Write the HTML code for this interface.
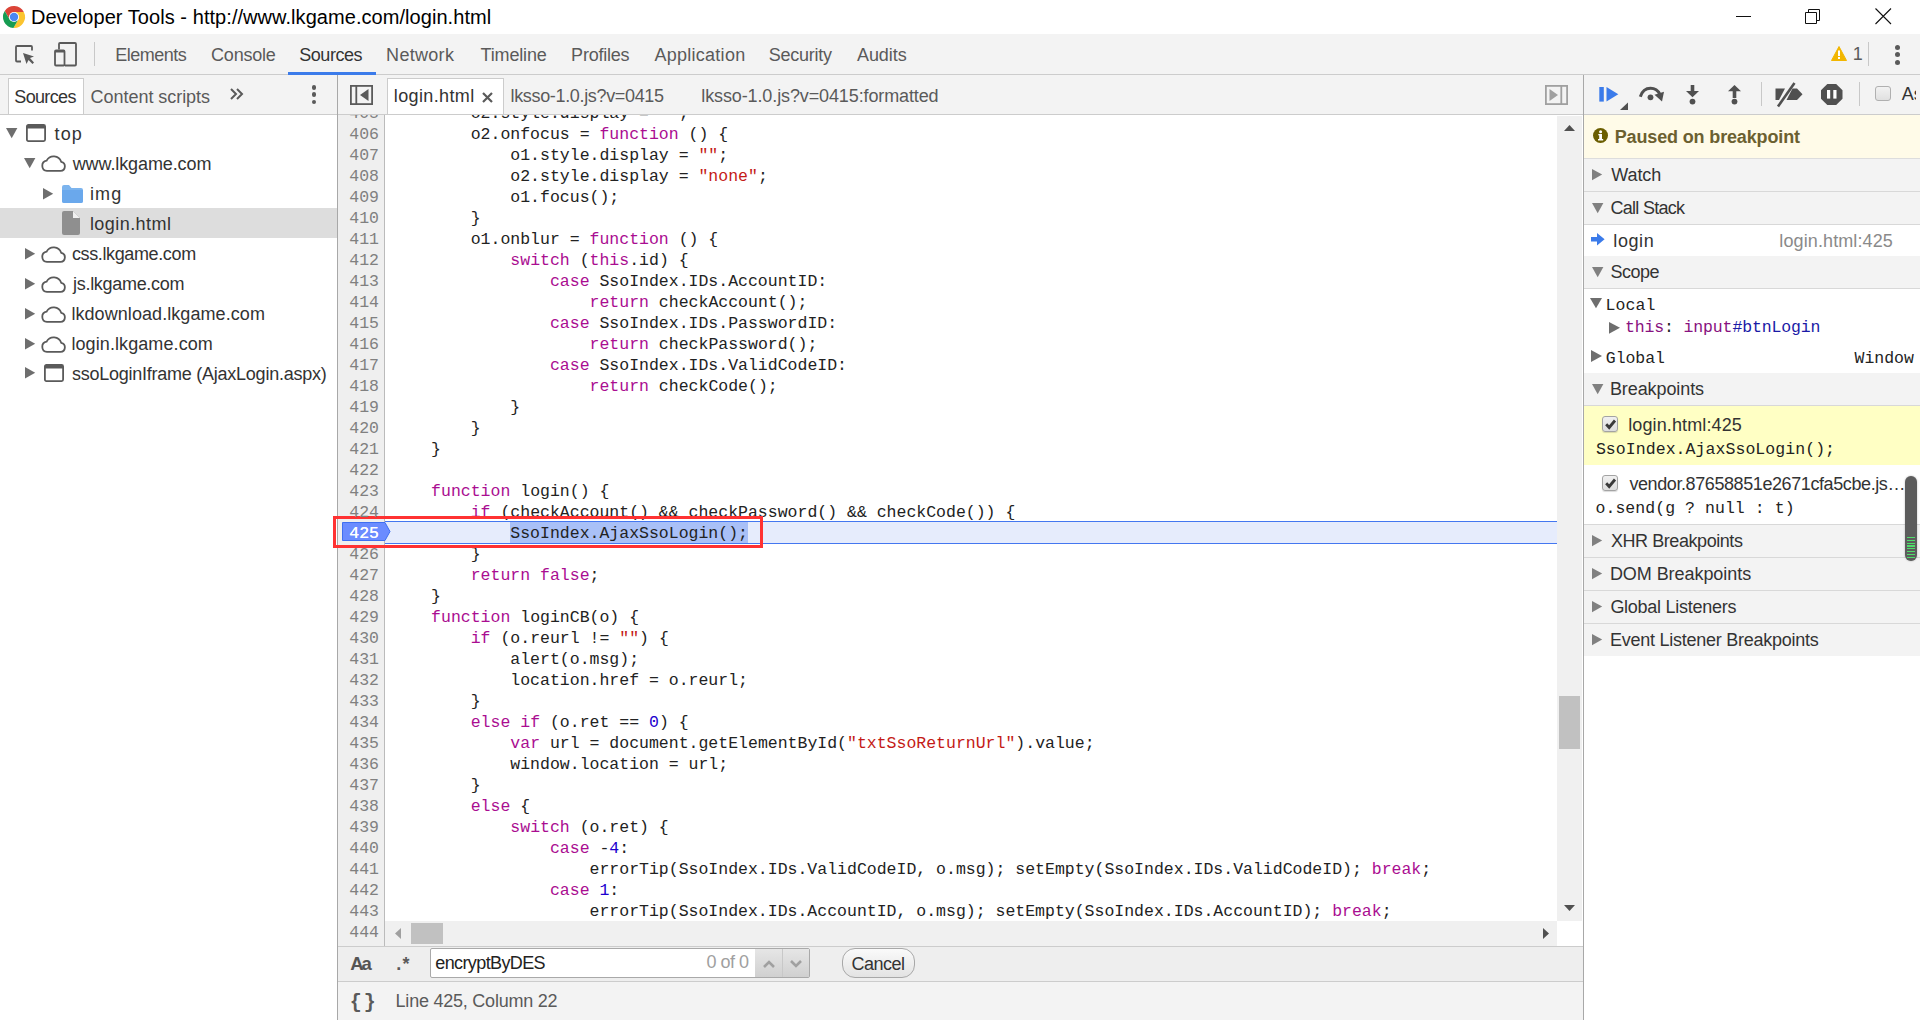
<!DOCTYPE html>
<html><head><meta charset="utf-8"><title>DevTools</title>
<style>
html,body{margin:0;padding:0;width:1920px;height:1020px;overflow:hidden;background:#fff;}
body>div,body>svg{position:absolute;}
svg{overflow:visible;}
</style></head><body>
<div style="left:0px;top:0px;width:1920px;height:34px;background:#ffffff;"></div>
<svg style="left:3px;top:6px;" width="22" height="22" viewBox="0 0 22 22">
<path d="M11 11 L11 6 L20.8 6 A11 11 0 0 0 1.77 5.01 L6.67 13.5 Z" fill="#db4437"/>
<path d="M11 11 L11 6 L20.8 6 A11 11 0 0 1 10.43 21.99 L15.33 13.5 Z" fill="#fbc42f"/>
<path d="M11 11 L15.33 13.5 L10.43 21.99 A11 11 0 0 1 1.77 5.01 L6.67 13.5 Z" fill="#169c52"/>
<circle cx="11" cy="11" r="5.1" fill="#ffffff"/>
<circle cx="11" cy="11" r="4.2" fill="#4a87f2"/>
</svg>
<div style="left:30.9px;top:6.97px;font-family:'Liberation Sans', sans-serif;font-size:20px;line-height:20px;color:#000000;white-space:pre;letter-spacing:0.055px;">Developer Tools - http://www.lkgame.com/login.html</div>
<div style="left:1736px;top:16px;width:15px;height:1px;background:#111;"></div>
<svg style="left:1805px;top:9px;" width="16" height="16" viewBox="0 0 16 16"><path d="M0.5 3.5 H11.5 V14.5 H0.5 Z M3.5 3.5 V0.5 H14.5 V11.5 H11.5" fill="none" stroke="#111" stroke-width="1"/></svg>
<svg style="left:1875px;top:8px;" width="17" height="17" viewBox="0 0 17 17"><path d="M0.5 0.5 L16 16 M16 0.5 L0.5 16" stroke="#111" stroke-width="1.1"/></svg>
<div style="left:0px;top:34px;width:1920px;height:40px;background:#f3f3f3;"></div>
<div style="left:0px;top:74px;width:1920px;height:1px;background:#cccccc;"></div>
<svg style="left:15px;top:45px;" width="20" height="20" viewBox="0 0 20 20"><path d="M6 16.5 H2 Q1 16.5 1 15.5 V2 Q1 1 2 1 H16 Q17 1 17 2 V5.5" fill="none" stroke="#5a5a5a" stroke-width="1.8"/>
<path d="M8 8 L19 11.5 L15 13 L19 17.5 L17.5 19 L13.5 15 L11.5 19 Z" fill="#5a5a5a"/></svg>
<svg style="left:54px;top:42px;" width="23" height="25" viewBox="0 0 23 25"><path d="M5 7.5 V2 Q5 1 6 1 H21 Q22 1 22 2 V22.5 Q22 23.5 21 23.5 H11" fill="none" stroke="#5a5a5a" stroke-width="1.8"/>
<rect x="1" y="8.5" width="9.5" height="15" rx="1" fill="none" stroke="#5a5a5a" stroke-width="1.8"/>
<rect x="1" y="8" width="9.5" height="2.5" fill="#5a5a5a"/></svg>
<div style="left:94px;top:42px;width:1px;height:24px;background:#c8c8c8;"></div>
<div style="left:115.3px;top:45.76px;font-family:'Liberation Sans', sans-serif;font-size:18px;line-height:18px;color:#5a5a5a;white-space:pre;letter-spacing:-0.529px;">Elements</div>
<div style="left:211.1px;top:45.76px;font-family:'Liberation Sans', sans-serif;font-size:18px;line-height:18px;color:#5a5a5a;white-space:pre;letter-spacing:-0.233px;">Console</div>
<div style="left:299.2px;top:45.76px;font-family:'Liberation Sans', sans-serif;font-size:18px;line-height:18px;color:#333333;white-space:pre;letter-spacing:-0.433px;">Sources</div>
<div style="left:386.1px;top:45.76px;font-family:'Liberation Sans', sans-serif;font-size:18px;line-height:18px;color:#5a5a5a;white-space:pre;letter-spacing:0.3px;">Network</div>
<div style="left:480.6px;top:45.76px;font-family:'Liberation Sans', sans-serif;font-size:18px;line-height:18px;color:#5a5a5a;white-space:pre;letter-spacing:-0.171px;">Timeline</div>
<div style="left:571.1px;top:45.76px;font-family:'Liberation Sans', sans-serif;font-size:18px;line-height:18px;color:#5a5a5a;white-space:pre;letter-spacing:-0.214px;">Profiles</div>
<div style="left:654.5px;top:45.76px;font-family:'Liberation Sans', sans-serif;font-size:18px;line-height:18px;color:#5a5a5a;white-space:pre;letter-spacing:0.26px;">Application</div>
<div style="left:768.7px;top:45.76px;font-family:'Liberation Sans', sans-serif;font-size:18px;line-height:18px;color:#5a5a5a;white-space:pre;letter-spacing:-0.243px;">Security</div>
<div style="left:857.0px;top:45.76px;font-family:'Liberation Sans', sans-serif;font-size:18px;line-height:18px;color:#5a5a5a;white-space:pre;letter-spacing:-0.08px;">Audits</div>
<div style="left:288px;top:72px;width:88px;height:3px;background:#3b7bea;"></div>
<svg style="left:1831px;top:46px;" width="16" height="15" viewBox="0 0 16 15"><path d="M8 0.5 L15.5 14.5 H0.5 Z" fill="#f2b600" stroke="#f2b600" stroke-linejoin="round" stroke-width="1"/><rect x="7" y="4.5" width="2" height="5.5" fill="#fff"/><rect x="7" y="11" width="2" height="2" fill="#fff"/></svg>
<div style="left:1852.7px;top:45.26px;font-family:'Liberation Sans', sans-serif;font-size:18px;line-height:18px;color:#5a5a5a;white-space:pre;letter-spacing:0px;">1</div>
<div style="left:1868px;top:42px;width:1px;height:24px;background:#c8c8c8;"></div>
<div style="left:1894.5px;top:45.0px;width:5px;height:5px;border-radius:50%;background:#5a5a5a"></div>
<div style="left:1894.5px;top:52.0px;width:5px;height:5px;border-radius:50%;background:#5a5a5a"></div>
<div style="left:1894.5px;top:59.5px;width:5px;height:5px;border-radius:50%;background:#5a5a5a"></div>
<div style="left:0px;top:75px;width:1920px;height:39px;background:#f3f3f3;"></div>
<div style="left:0px;top:114px;width:1920px;height:1px;background:#cccccc;"></div>
<div style="left:8px;top:78px;width:76px;height:36px;background:#ffffff;box-sizing:border-box;border:1px solid #cccccc;border-bottom:none;"></div>
<div style="left:14.3px;top:87.76px;font-family:'Liberation Sans', sans-serif;font-size:18px;line-height:18px;color:#333333;white-space:pre;letter-spacing:-0.65px;">Sources</div>
<div style="left:90.6px;top:87.76px;font-family:'Liberation Sans', sans-serif;font-size:18px;line-height:18px;color:#5a5a5a;white-space:pre;letter-spacing:-0.043px;">Content scripts</div>
<svg style="left:230px;top:88px;" width="14" height="12" viewBox="0 0 14 12"><path d="M1 1 L6 6 L1 11 M7 1 L12 6 L7 11" fill="none" stroke="#5a5a5a" stroke-width="2"/></svg>
<div style="left:311.5px;top:85.2px;width:4.6px;height:4.6px;border-radius:50%;background:#5a5a5a"></div>
<div style="left:311.5px;top:92.4px;width:4.6px;height:4.6px;border-radius:50%;background:#5a5a5a"></div>
<div style="left:311.5px;top:99.7px;width:4.6px;height:4.6px;border-radius:50%;background:#5a5a5a"></div>
<div style="left:337px;top:75px;width:1px;height:945px;background:#a8a8a8;"></div>
<div style="left:1583px;top:75px;width:1px;height:945px;background:#a8a8a8;"></div>
<svg style="left:350px;top:85px;" width="23" height="20" viewBox="0 0 23 20"><rect x="0.9" y="0.9" width="21.2" height="18.2" fill="none" stroke="#5a5a5a" stroke-width="1.8"/><rect x="5.4" y="1" width="1.8" height="18" fill="#5a5a5a"/><path d="M10 10 L18.5 4 V16 Z" fill="#5a5a5a"/></svg>
<div style="left:387px;top:78px;width:117px;height:36px;background:#ffffff;box-sizing:border-box;border:1px solid #cccccc;border-bottom:none;"></div>
<div style="left:393.8px;top:87.26px;font-family:'Liberation Sans', sans-serif;font-size:18px;line-height:18px;color:#333333;white-space:pre;letter-spacing:0.378px;">login.html</div>
<svg style="left:482px;top:91.5px;" width="11" height="11" viewBox="0 0 11 11"><path d="M1 1 L10 10 M10 1 L1 10" stroke="#5a5a5a" stroke-width="2.2"/></svg>
<div style="left:510.5px;top:87.26px;font-family:'Liberation Sans', sans-serif;font-size:18px;line-height:18px;color:#5a5a5a;white-space:pre;letter-spacing:-0.339px;">lksso-1.0.js?v=0415</div>
<div style="left:701.3px;top:87.26px;font-family:'Liberation Sans', sans-serif;font-size:18px;line-height:18px;color:#5a5a5a;white-space:pre;letter-spacing:-0.118px;">lksso-1.0.js?v=0415:formatted</div>
<svg style="left:1545px;top:85px;" width="23" height="20" viewBox="0 0 23 20"><rect x="0.9" y="0.9" width="21.2" height="18.2" fill="none" stroke="#a0a0a0" stroke-width="1.8"/><rect x="15.4" y="1" width="1.8" height="18" fill="#a0a0a0"/><path d="M13 10 L4.5 4 V16 Z" fill="#a0a0a0"/></svg>
<div style="left:0px;top:208px;width:337px;height:30px;background:#dddddd;"></div>
<svg style="left:6.4px;top:128.4px;" width="11.4" height="10.2" viewBox="0 0 11.4 10.2"><path d="M0 0 H11.4 L5.7 10.2 Z" fill="#6e6e6e"/></svg>
<svg style="left:26px;top:124px;" width="20" height="18" viewBox="0 0 20 18"><rect x="0.9" y="0.9" width="18.2" height="16.2" rx="1.5" fill="none" stroke="#5a5a5a" stroke-width="1.8"/><rect x="1" y="1" width="18" height="3.5" fill="#5a5a5a"/></svg>
<div style="left:54.6px;top:124.76px;font-family:'Liberation Sans', sans-serif;font-size:18px;line-height:18px;color:#333333;white-space:pre;letter-spacing:1.05px;">top</div>
<svg style="left:24.2px;top:158.3px;" width="11.4" height="10.2" viewBox="0 0 11.4 10.2"><path d="M0 0 H11.4 L5.7 10.2 Z" fill="#6e6e6e"/></svg>
<svg style="left:39.5px;top:154px;" width="27" height="18" viewBox="0 0 27 18"><path d="M7 16.9 H20.5 A4.6 4.6 0 0 0 21.2 7.8 A8 8 0 0 0 6.6 6.6 A5.2 5.2 0 0 0 7 16.9 Z" fill="none" stroke="#5a5a5a" stroke-width="1.8"/></svg>
<div style="left:72.7px;top:154.76px;font-family:'Liberation Sans', sans-serif;font-size:18px;line-height:18px;color:#333333;white-space:pre;letter-spacing:-0.1px;">www.lkgame.com</div>
<svg style="left:43.3px;top:187.6px;" width="10.2" height="11.4" viewBox="0 0 10.2 11.4"><path d="M0 0 L10.2 5.7 L0 11.4 Z" fill="#6e6e6e"/></svg>
<svg style="left:62px;top:185px;" width="21" height="18" viewBox="0 0 21 18"><path d="M0 2 Q0 0 2 0 H7 L9.5 3 H19 Q21 3 21 5 V16 Q21 18 19 18 H2 Q0 18 0 16 Z" fill="#7cb4ee"/><path d="M0 5 H21 V16 Q21 18 19 18 H2 Q0 18 0 16 Z" fill="#6aa8ec"/></svg>
<div style="left:89.9px;top:184.76px;font-family:'Liberation Sans', sans-serif;font-size:18px;line-height:18px;color:#333333;white-space:pre;letter-spacing:1.2px;">img</div>
<svg style="left:62px;top:211px;" width="18" height="24" viewBox="0 0 18 24"><path d="M2 0 H11 L18 7 V22 Q18 24 16 24 H2 Q0 24 0 22 V2 Q0 0 2 0 Z" fill="#8f8f8f"/><path d="M11 0 L18 7 H11 Z" fill="#f0f0f0"/></svg>
<div style="left:89.9px;top:214.76px;font-family:'Liberation Sans', sans-serif;font-size:18px;line-height:18px;color:#333333;white-space:pre;letter-spacing:0.444px;">login.html</div>
<svg style="left:25.3px;top:247.8px;" width="10.2" height="11.4" viewBox="0 0 10.2 11.4"><path d="M0 0 L10.2 5.7 L0 11.4 Z" fill="#6e6e6e"/></svg>
<svg style="left:39.5px;top:244.5px;" width="27" height="18" viewBox="0 0 27 18"><path d="M7 16.9 H20.5 A4.6 4.6 0 0 0 21.2 7.8 A8 8 0 0 0 6.6 6.6 A5.2 5.2 0 0 0 7 16.9 Z" fill="none" stroke="#5a5a5a" stroke-width="1.8"/></svg>
<div style="left:71.9px;top:244.76px;font-family:'Liberation Sans', sans-serif;font-size:18px;line-height:18px;color:#333333;white-space:pre;letter-spacing:-0.369px;">css.lkgame.com</div>
<svg style="left:25.3px;top:277.8px;" width="10.2" height="11.4" viewBox="0 0 10.2 11.4"><path d="M0 0 L10.2 5.7 L0 11.4 Z" fill="#6e6e6e"/></svg>
<svg style="left:39.5px;top:274.5px;" width="27" height="18" viewBox="0 0 27 18"><path d="M7 16.9 H20.5 A4.6 4.6 0 0 0 21.2 7.8 A8 8 0 0 0 6.6 6.6 A5.2 5.2 0 0 0 7 16.9 Z" fill="none" stroke="#5a5a5a" stroke-width="1.8"/></svg>
<div style="left:73.1px;top:274.76px;font-family:'Liberation Sans', sans-serif;font-size:18px;line-height:18px;color:#333333;white-space:pre;letter-spacing:-0.308px;">js.lkgame.com</div>
<svg style="left:25.3px;top:307.8px;" width="10.2" height="11.4" viewBox="0 0 10.2 11.4"><path d="M0 0 L10.2 5.7 L0 11.4 Z" fill="#6e6e6e"/></svg>
<svg style="left:39.5px;top:304.5px;" width="27" height="18" viewBox="0 0 27 18"><path d="M7 16.9 H20.5 A4.6 4.6 0 0 0 21.2 7.8 A8 8 0 0 0 6.6 6.6 A5.2 5.2 0 0 0 7 16.9 Z" fill="none" stroke="#5a5a5a" stroke-width="1.8"/></svg>
<div style="left:71.4px;top:304.76px;font-family:'Liberation Sans', sans-serif;font-size:18px;line-height:18px;color:#333333;white-space:pre;letter-spacing:0.07px;">lkdownload.lkgame.com</div>
<svg style="left:25.3px;top:337.8px;" width="10.2" height="11.4" viewBox="0 0 10.2 11.4"><path d="M0 0 L10.2 5.7 L0 11.4 Z" fill="#6e6e6e"/></svg>
<svg style="left:39.5px;top:334.5px;" width="27" height="18" viewBox="0 0 27 18"><path d="M7 16.9 H20.5 A4.6 4.6 0 0 0 21.2 7.8 A8 8 0 0 0 6.6 6.6 A5.2 5.2 0 0 0 7 16.9 Z" fill="none" stroke="#5a5a5a" stroke-width="1.8"/></svg>
<div style="left:71.4px;top:334.76px;font-family:'Liberation Sans', sans-serif;font-size:18px;line-height:18px;color:#333333;white-space:pre;letter-spacing:0.093px;">login.lkgame.com</div>
<svg style="left:25.3px;top:367.4px;" width="10.2" height="11.4" viewBox="0 0 10.2 11.4"><path d="M0 0 L10.2 5.7 L0 11.4 Z" fill="#6e6e6e"/></svg>
<svg style="left:44px;top:364px;" width="20" height="18" viewBox="0 0 20 18"><rect x="0.9" y="0.9" width="18.2" height="16.2" rx="1.5" fill="none" stroke="#5a5a5a" stroke-width="1.8"/><rect x="1" y="1" width="18" height="3.5" fill="#5a5a5a"/></svg>
<div style="left:72.1px;top:364.76px;font-family:'Liberation Sans', sans-serif;font-size:18px;line-height:18px;color:#333333;white-space:pre;letter-spacing:-0.253px;">ssoLoginIframe (AjaxLogin.aspx)</div>
<div style="left:338px;top:115px;width:46px;height:832px;background:#efefef;"></div>
<div style="left:384px;top:115px;width:1px;height:832px;background:#bbbbbb;"></div>
<div style="left:385px;top:521px;width:1172px;height:23px;background:#e6ecfc;box-sizing:border-box;border-top:1px solid #4477f0;border-bottom:1px solid #4477f0;"></div>
<div style="left:510.3px;top:522px;width:237.6px;height:21px;background:#a9c0f7;"></div>
<div style="left:338px;top:115px;width:1219px;height:831px;overflow:hidden;">
<div style="position:absolute;left:53.5px;top:-8.65px;font-family:'Liberation Mono', monospace;font-size:16.5px;line-height:16.5px;color:#222222;white-space:pre;">        o2.style.display = <span style="color:#c41a16">&quot;&quot;</span>;</div>
<div style="position:absolute;left:53.5px;top:12.35px;font-family:'Liberation Mono', monospace;font-size:16.5px;line-height:16.5px;color:#222222;white-space:pre;">        o2.onfocus = <span style="color:#aa0d91">function</span> () {</div>
<div style="position:absolute;left:53.5px;top:33.35px;font-family:'Liberation Mono', monospace;font-size:16.5px;line-height:16.5px;color:#222222;white-space:pre;">            o1.style.display = <span style="color:#c41a16">&quot;&quot;</span>;</div>
<div style="position:absolute;left:53.5px;top:54.35px;font-family:'Liberation Mono', monospace;font-size:16.5px;line-height:16.5px;color:#222222;white-space:pre;">            o2.style.display = <span style="color:#c41a16">&quot;none&quot;</span>;</div>
<div style="position:absolute;left:53.5px;top:75.35px;font-family:'Liberation Mono', monospace;font-size:16.5px;line-height:16.5px;color:#222222;white-space:pre;">            o1.focus();</div>
<div style="position:absolute;left:53.5px;top:96.35px;font-family:'Liberation Mono', monospace;font-size:16.5px;line-height:16.5px;color:#222222;white-space:pre;">        }</div>
<div style="position:absolute;left:53.5px;top:117.35px;font-family:'Liberation Mono', monospace;font-size:16.5px;line-height:16.5px;color:#222222;white-space:pre;">        o1.onblur = <span style="color:#aa0d91">function</span> () {</div>
<div style="position:absolute;left:53.5px;top:138.35px;font-family:'Liberation Mono', monospace;font-size:16.5px;line-height:16.5px;color:#222222;white-space:pre;">            <span style="color:#aa0d91">switch</span> (<span style="color:#aa0d91">this</span>.id) {</div>
<div style="position:absolute;left:53.5px;top:159.35px;font-family:'Liberation Mono', monospace;font-size:16.5px;line-height:16.5px;color:#222222;white-space:pre;">                <span style="color:#aa0d91">case</span> SsoIndex.IDs.AccountID:</div>
<div style="position:absolute;left:53.5px;top:180.35px;font-family:'Liberation Mono', monospace;font-size:16.5px;line-height:16.5px;color:#222222;white-space:pre;">                    <span style="color:#aa0d91">return</span> checkAccount();</div>
<div style="position:absolute;left:53.5px;top:201.35px;font-family:'Liberation Mono', monospace;font-size:16.5px;line-height:16.5px;color:#222222;white-space:pre;">                <span style="color:#aa0d91">case</span> SsoIndex.IDs.PasswordID:</div>
<div style="position:absolute;left:53.5px;top:222.35px;font-family:'Liberation Mono', monospace;font-size:16.5px;line-height:16.5px;color:#222222;white-space:pre;">                    <span style="color:#aa0d91">return</span> checkPassword();</div>
<div style="position:absolute;left:53.5px;top:243.35px;font-family:'Liberation Mono', monospace;font-size:16.5px;line-height:16.5px;color:#222222;white-space:pre;">                <span style="color:#aa0d91">case</span> SsoIndex.IDs.ValidCodeID:</div>
<div style="position:absolute;left:53.5px;top:264.35px;font-family:'Liberation Mono', monospace;font-size:16.5px;line-height:16.5px;color:#222222;white-space:pre;">                    <span style="color:#aa0d91">return</span> checkCode();</div>
<div style="position:absolute;left:53.5px;top:285.35px;font-family:'Liberation Mono', monospace;font-size:16.5px;line-height:16.5px;color:#222222;white-space:pre;">            }</div>
<div style="position:absolute;left:53.5px;top:306.35px;font-family:'Liberation Mono', monospace;font-size:16.5px;line-height:16.5px;color:#222222;white-space:pre;">        }</div>
<div style="position:absolute;left:53.5px;top:327.35px;font-family:'Liberation Mono', monospace;font-size:16.5px;line-height:16.5px;color:#222222;white-space:pre;">    }</div>
<div style="position:absolute;left:53.5px;top:348.35px;font-family:'Liberation Mono', monospace;font-size:16.5px;line-height:16.5px;color:#222222;white-space:pre;"></div>
<div style="position:absolute;left:53.5px;top:369.35px;font-family:'Liberation Mono', monospace;font-size:16.5px;line-height:16.5px;color:#222222;white-space:pre;">    <span style="color:#aa0d91">function</span> login() {</div>
<div style="position:absolute;left:53.5px;top:390.35px;font-family:'Liberation Mono', monospace;font-size:16.5px;line-height:16.5px;color:#222222;white-space:pre;">        <span style="color:#aa0d91">if</span> (checkAccount() &amp;&amp; checkPassword() &amp;&amp; checkCode()) {</div>
<div style="position:absolute;left:53.5px;top:411.35px;font-family:'Liberation Mono', monospace;font-size:16.5px;line-height:16.5px;color:#222222;white-space:pre;">            SsoIndex.AjaxSsoLogin();</div>
<div style="position:absolute;left:53.5px;top:432.35px;font-family:'Liberation Mono', monospace;font-size:16.5px;line-height:16.5px;color:#222222;white-space:pre;">        }</div>
<div style="position:absolute;left:53.5px;top:453.35px;font-family:'Liberation Mono', monospace;font-size:16.5px;line-height:16.5px;color:#222222;white-space:pre;">        <span style="color:#aa0d91">return</span> <span style="color:#aa0d91">false</span>;</div>
<div style="position:absolute;left:53.5px;top:474.35px;font-family:'Liberation Mono', monospace;font-size:16.5px;line-height:16.5px;color:#222222;white-space:pre;">    }</div>
<div style="position:absolute;left:53.5px;top:495.35px;font-family:'Liberation Mono', monospace;font-size:16.5px;line-height:16.5px;color:#222222;white-space:pre;">    <span style="color:#aa0d91">function</span> loginCB(o) {</div>
<div style="position:absolute;left:53.5px;top:516.35px;font-family:'Liberation Mono', monospace;font-size:16.5px;line-height:16.5px;color:#222222;white-space:pre;">        <span style="color:#aa0d91">if</span> (o.reurl != <span style="color:#c41a16">&quot;&quot;</span>) {</div>
<div style="position:absolute;left:53.5px;top:537.35px;font-family:'Liberation Mono', monospace;font-size:16.5px;line-height:16.5px;color:#222222;white-space:pre;">            alert(o.msg);</div>
<div style="position:absolute;left:53.5px;top:558.35px;font-family:'Liberation Mono', monospace;font-size:16.5px;line-height:16.5px;color:#222222;white-space:pre;">            location.href = o.reurl;</div>
<div style="position:absolute;left:53.5px;top:579.35px;font-family:'Liberation Mono', monospace;font-size:16.5px;line-height:16.5px;color:#222222;white-space:pre;">        }</div>
<div style="position:absolute;left:53.5px;top:600.35px;font-family:'Liberation Mono', monospace;font-size:16.5px;line-height:16.5px;color:#222222;white-space:pre;">        <span style="color:#aa0d91">else</span> <span style="color:#aa0d91">if</span> (o.ret == <span style="color:#1c00cf">0</span>) {</div>
<div style="position:absolute;left:53.5px;top:621.35px;font-family:'Liberation Mono', monospace;font-size:16.5px;line-height:16.5px;color:#222222;white-space:pre;">            <span style="color:#aa0d91">var</span> url = document.getElementById(<span style="color:#c41a16">&quot;txtSsoReturnUrl&quot;</span>).value;</div>
<div style="position:absolute;left:53.5px;top:642.35px;font-family:'Liberation Mono', monospace;font-size:16.5px;line-height:16.5px;color:#222222;white-space:pre;">            window.location = url;</div>
<div style="position:absolute;left:53.5px;top:663.35px;font-family:'Liberation Mono', monospace;font-size:16.5px;line-height:16.5px;color:#222222;white-space:pre;">        }</div>
<div style="position:absolute;left:53.5px;top:684.35px;font-family:'Liberation Mono', monospace;font-size:16.5px;line-height:16.5px;color:#222222;white-space:pre;">        <span style="color:#aa0d91">else</span> {</div>
<div style="position:absolute;left:53.5px;top:705.35px;font-family:'Liberation Mono', monospace;font-size:16.5px;line-height:16.5px;color:#222222;white-space:pre;">            <span style="color:#aa0d91">switch</span> (o.ret) {</div>
<div style="position:absolute;left:53.5px;top:726.35px;font-family:'Liberation Mono', monospace;font-size:16.5px;line-height:16.5px;color:#222222;white-space:pre;">                <span style="color:#aa0d91">case</span> -<span style="color:#1c00cf">4</span>:</div>
<div style="position:absolute;left:53.5px;top:747.35px;font-family:'Liberation Mono', monospace;font-size:16.5px;line-height:16.5px;color:#222222;white-space:pre;">                    errorTip(SsoIndex.IDs.ValidCodeID, o.msg); setEmpty(SsoIndex.IDs.ValidCodeID); <span style="color:#aa0d91">break</span>;</div>
<div style="position:absolute;left:53.5px;top:768.35px;font-family:'Liberation Mono', monospace;font-size:16.5px;line-height:16.5px;color:#222222;white-space:pre;">                <span style="color:#aa0d91">case</span> <span style="color:#1c00cf">1</span>:</div>
<div style="position:absolute;left:53.5px;top:789.35px;font-family:'Liberation Mono', monospace;font-size:16.5px;line-height:16.5px;color:#222222;white-space:pre;">                    errorTip(SsoIndex.IDs.AccountID, o.msg); setEmpty(SsoIndex.IDs.AccountID); <span style="color:#aa0d91">break</span>;</div>
<div style="position:absolute;left:53.5px;top:810.35px;font-family:'Liberation Mono', monospace;font-size:16.5px;line-height:16.5px;color:#222222;white-space:pre;">                <span style="color:#aa0d91">case</span> <span style="color:#1c00cf">2</span>:</div>
<div style="position:absolute;left:53.5px;top:831.35px;font-family:'Liberation Mono', monospace;font-size:16.5px;line-height:16.5px;color:#222222;white-space:pre;">                    errorTip(SsoIndex.IDs.PasswordID, o.msg); setEmpty(SsoIndex.IDs.PasswordID); <span style="color:#aa0d91">break</span>;</div>
</div>
<div style="left:338px;top:115px;width:46px;height:832px;overflow:hidden;">
<div style="position:absolute;right:5px;top:-8.65px;font-family:'Liberation Mono', monospace;font-size:16.5px;line-height:16.5px;color:#808080;white-space:pre;z-index:2">405</div>
<div style="position:absolute;right:5px;top:12.35px;font-family:'Liberation Mono', monospace;font-size:16.5px;line-height:16.5px;color:#808080;white-space:pre;z-index:2">406</div>
<div style="position:absolute;right:5px;top:33.35px;font-family:'Liberation Mono', monospace;font-size:16.5px;line-height:16.5px;color:#808080;white-space:pre;z-index:2">407</div>
<div style="position:absolute;right:5px;top:54.35px;font-family:'Liberation Mono', monospace;font-size:16.5px;line-height:16.5px;color:#808080;white-space:pre;z-index:2">408</div>
<div style="position:absolute;right:5px;top:75.35px;font-family:'Liberation Mono', monospace;font-size:16.5px;line-height:16.5px;color:#808080;white-space:pre;z-index:2">409</div>
<div style="position:absolute;right:5px;top:96.35px;font-family:'Liberation Mono', monospace;font-size:16.5px;line-height:16.5px;color:#808080;white-space:pre;z-index:2">410</div>
<div style="position:absolute;right:5px;top:117.35px;font-family:'Liberation Mono', monospace;font-size:16.5px;line-height:16.5px;color:#808080;white-space:pre;z-index:2">411</div>
<div style="position:absolute;right:5px;top:138.35px;font-family:'Liberation Mono', monospace;font-size:16.5px;line-height:16.5px;color:#808080;white-space:pre;z-index:2">412</div>
<div style="position:absolute;right:5px;top:159.35px;font-family:'Liberation Mono', monospace;font-size:16.5px;line-height:16.5px;color:#808080;white-space:pre;z-index:2">413</div>
<div style="position:absolute;right:5px;top:180.35px;font-family:'Liberation Mono', monospace;font-size:16.5px;line-height:16.5px;color:#808080;white-space:pre;z-index:2">414</div>
<div style="position:absolute;right:5px;top:201.35px;font-family:'Liberation Mono', monospace;font-size:16.5px;line-height:16.5px;color:#808080;white-space:pre;z-index:2">415</div>
<div style="position:absolute;right:5px;top:222.35px;font-family:'Liberation Mono', monospace;font-size:16.5px;line-height:16.5px;color:#808080;white-space:pre;z-index:2">416</div>
<div style="position:absolute;right:5px;top:243.35px;font-family:'Liberation Mono', monospace;font-size:16.5px;line-height:16.5px;color:#808080;white-space:pre;z-index:2">417</div>
<div style="position:absolute;right:5px;top:264.35px;font-family:'Liberation Mono', monospace;font-size:16.5px;line-height:16.5px;color:#808080;white-space:pre;z-index:2">418</div>
<div style="position:absolute;right:5px;top:285.35px;font-family:'Liberation Mono', monospace;font-size:16.5px;line-height:16.5px;color:#808080;white-space:pre;z-index:2">419</div>
<div style="position:absolute;right:5px;top:306.35px;font-family:'Liberation Mono', monospace;font-size:16.5px;line-height:16.5px;color:#808080;white-space:pre;z-index:2">420</div>
<div style="position:absolute;right:5px;top:327.35px;font-family:'Liberation Mono', monospace;font-size:16.5px;line-height:16.5px;color:#808080;white-space:pre;z-index:2">421</div>
<div style="position:absolute;right:5px;top:348.35px;font-family:'Liberation Mono', monospace;font-size:16.5px;line-height:16.5px;color:#808080;white-space:pre;z-index:2">422</div>
<div style="position:absolute;right:5px;top:369.35px;font-family:'Liberation Mono', monospace;font-size:16.5px;line-height:16.5px;color:#808080;white-space:pre;z-index:2">423</div>
<div style="position:absolute;right:5px;top:390.35px;font-family:'Liberation Mono', monospace;font-size:16.5px;line-height:16.5px;color:#808080;white-space:pre;z-index:2">424</div>
<div style="position:absolute;right:5px;top:411.35px;font-family:'Liberation Mono', monospace;font-size:16.5px;line-height:16.5px;color:#ffffff;white-space:pre;z-index:2">425</div>
<div style="position:absolute;right:5px;top:432.35px;font-family:'Liberation Mono', monospace;font-size:16.5px;line-height:16.5px;color:#808080;white-space:pre;z-index:2">426</div>
<div style="position:absolute;right:5px;top:453.35px;font-family:'Liberation Mono', monospace;font-size:16.5px;line-height:16.5px;color:#808080;white-space:pre;z-index:2">427</div>
<div style="position:absolute;right:5px;top:474.35px;font-family:'Liberation Mono', monospace;font-size:16.5px;line-height:16.5px;color:#808080;white-space:pre;z-index:2">428</div>
<div style="position:absolute;right:5px;top:495.35px;font-family:'Liberation Mono', monospace;font-size:16.5px;line-height:16.5px;color:#808080;white-space:pre;z-index:2">429</div>
<div style="position:absolute;right:5px;top:516.35px;font-family:'Liberation Mono', monospace;font-size:16.5px;line-height:16.5px;color:#808080;white-space:pre;z-index:2">430</div>
<div style="position:absolute;right:5px;top:537.35px;font-family:'Liberation Mono', monospace;font-size:16.5px;line-height:16.5px;color:#808080;white-space:pre;z-index:2">431</div>
<div style="position:absolute;right:5px;top:558.35px;font-family:'Liberation Mono', monospace;font-size:16.5px;line-height:16.5px;color:#808080;white-space:pre;z-index:2">432</div>
<div style="position:absolute;right:5px;top:579.35px;font-family:'Liberation Mono', monospace;font-size:16.5px;line-height:16.5px;color:#808080;white-space:pre;z-index:2">433</div>
<div style="position:absolute;right:5px;top:600.35px;font-family:'Liberation Mono', monospace;font-size:16.5px;line-height:16.5px;color:#808080;white-space:pre;z-index:2">434</div>
<div style="position:absolute;right:5px;top:621.35px;font-family:'Liberation Mono', monospace;font-size:16.5px;line-height:16.5px;color:#808080;white-space:pre;z-index:2">435</div>
<div style="position:absolute;right:5px;top:642.35px;font-family:'Liberation Mono', monospace;font-size:16.5px;line-height:16.5px;color:#808080;white-space:pre;z-index:2">436</div>
<div style="position:absolute;right:5px;top:663.35px;font-family:'Liberation Mono', monospace;font-size:16.5px;line-height:16.5px;color:#808080;white-space:pre;z-index:2">437</div>
<div style="position:absolute;right:5px;top:684.35px;font-family:'Liberation Mono', monospace;font-size:16.5px;line-height:16.5px;color:#808080;white-space:pre;z-index:2">438</div>
<div style="position:absolute;right:5px;top:705.35px;font-family:'Liberation Mono', monospace;font-size:16.5px;line-height:16.5px;color:#808080;white-space:pre;z-index:2">439</div>
<div style="position:absolute;right:5px;top:726.35px;font-family:'Liberation Mono', monospace;font-size:16.5px;line-height:16.5px;color:#808080;white-space:pre;z-index:2">440</div>
<div style="position:absolute;right:5px;top:747.35px;font-family:'Liberation Mono', monospace;font-size:16.5px;line-height:16.5px;color:#808080;white-space:pre;z-index:2">441</div>
<div style="position:absolute;right:5px;top:768.35px;font-family:'Liberation Mono', monospace;font-size:16.5px;line-height:16.5px;color:#808080;white-space:pre;z-index:2">442</div>
<div style="position:absolute;right:5px;top:789.35px;font-family:'Liberation Mono', monospace;font-size:16.5px;line-height:16.5px;color:#808080;white-space:pre;z-index:2">443</div>
<div style="position:absolute;right:5px;top:810.35px;font-family:'Liberation Mono', monospace;font-size:16.5px;line-height:16.5px;color:#808080;white-space:pre;z-index:2">444</div>
<div style="position:absolute;right:5px;top:831.35px;font-family:'Liberation Mono', monospace;font-size:16.5px;line-height:16.5px;color:#808080;white-space:pre;z-index:2">445</div>
</div>
<svg style="left:342px;top:522px;" width="49" height="19" viewBox="0 0 49 19"><path d="M0.5 0.5 H43 L48 9.5 L43 18.5 H0.5 Z" fill="#6b8cff" stroke="#3f6ff0" stroke-width="1"/></svg>
<div style="right:1541px;top:526.35px;font-family:'Liberation Mono', monospace;font-size:16.5px;line-height:16.5px;color:#fff;white-space:pre;">425</div>
<div style="left:1557px;top:116px;width:25px;height:805px;background:#f0f0f0;"></div>
<svg style="left:1564px;top:124.8px;" width="11" height="6" viewBox="0 0 11 6"><path d="M0 6 L5.5 0 L11 6 Z" fill="#505050"/></svg>
<div style="left:1559px;top:696px;width:21px;height:53px;background:#c1c1c1;"></div>
<svg style="left:1564px;top:905px;" width="11" height="6" viewBox="0 0 11 6"><path d="M0 0 L11 0 L5.5 6 Z" fill="#505050"/></svg>
<div style="left:385px;top:921px;width:1172px;height:25px;background:#f0f0f0;"></div>
<svg style="left:395px;top:928px;" width="6" height="11" viewBox="0 0 6 11"><path d="M6 0 L0 5.5 L6 11 Z" fill="#a0a0a0"/></svg>
<div style="left:411px;top:923px;width:32px;height:21px;background:#c1c1c1;"></div>
<svg style="left:1543px;top:928px;" width="6" height="11" viewBox="0 0 6 11"><path d="M0 0 L6 5.5 L0 11 Z" fill="#505050"/></svg>
<div style="left:1557px;top:921px;width:26px;height:25px;background:#ffffff;"></div>
<div style="left:338px;top:946px;width:1245px;height:1px;background:#cccccc;"></div>
<div style="left:333px;top:516px;width:430px;height:32px;background:transparent;box-sizing:border-box;border:3px solid #ff3232;"></div>
<div style="left:338px;top:947px;width:1245px;height:34px;background:#eeeeee;"></div>
<div style="left:338px;top:981px;width:1245px;height:1px;background:#cccccc;"></div>
<div style="left:350.2px;top:955.04px;font-family:'Liberation Sans', sans-serif;font-size:18.5px;line-height:18.5px;color:#555555;white-space:pre;font-weight:bold;letter-spacing:-2.1px;">Aa</div>
<div style="left:396.3px;top:955.46px;font-family:'Liberation Sans', sans-serif;font-size:18px;line-height:18px;color:#5a5a5a;white-space:pre;font-weight:bold;letter-spacing:1.1px;">.*</div>
<div style="left:430px;top:948px;width:380px;height:30px;background:#ffffff;box-sizing:border-box;border:1px solid #a9a9a9;border-radius:2px;"></div>
<div style="left:755px;top:949px;width:54px;height:28px;background:linear-gradient(#e6e6e6,#d0d0d0);"></div>
<div style="left:782px;top:949px;width:1px;height:28px;background:#c8c8c8;"></div>
<svg style="left:763px;top:960px;" width="12" height="8" viewBox="0 0 12 8"><path d="M1 7 L6 2 L11 7" fill="none" stroke="#a0a0a0" stroke-width="2.6"/></svg>
<svg style="left:790px;top:960px;" width="12" height="8" viewBox="0 0 12 8"><path d="M1 1 L6 6 L11 1" fill="none" stroke="#a0a0a0" stroke-width="2.6"/></svg>
<div style="left:435.3px;top:954.46px;font-family:'Liberation Sans', sans-serif;font-size:18px;line-height:18px;color:#222222;white-space:pre;letter-spacing:-0.614px;">encryptByDES</div>
<div style="left:706.6px;top:953.36px;font-family:'Liberation Sans', sans-serif;font-size:18px;line-height:18px;color:#a0a0a0;white-space:pre;letter-spacing:-0.52px;">0 of 0</div>
<div style="left:842px;top:948px;width:73px;height:30px;background:linear-gradient(#fafafa,#e3e3e3);box-sizing:border-box;border:1px solid #a8a8a8;border-radius:13px;"></div>
<div style="left:851.6px;top:954.76px;font-family:'Liberation Sans', sans-serif;font-size:18px;line-height:18px;color:#333333;white-space:pre;letter-spacing:-0.54px;">Cancel</div>
<div style="left:338px;top:982px;width:1245px;height:38px;background:#f3f3f3;"></div>
<div style="left:349.8px;top:993.17px;font-family:'Liberation Mono', monospace;font-size:20px;line-height:20px;color:#5a5a5a;white-space:pre;font-weight:bold;letter-spacing:2.0px;">{}</div>
<div style="left:395.6px;top:992.46px;font-family:'Liberation Sans', sans-serif;font-size:18px;line-height:18px;color:#5a5a5a;white-space:pre;letter-spacing:-0.231px;">Line 425, Column 22</div>
<svg style="left:1599px;top:86.7px;" width="30" height="23" viewBox="0 0 30 23"><rect x="0.3" y="0" width="4.5" height="14.6" fill="#3b7bea"/><path d="M7.5 0 L19.3 7.3 L7.5 14.6 Z" fill="#3b7bea"/><path d="M21 23 H29 V15.5 Z" fill="#505050"/></svg>
<svg style="left:1638px;top:86px;" width="27" height="16" viewBox="0 0 27 16"><path d="M2.3 10.8 Q5 2.3 12.5 2.3 Q19 2.3 22 8.5" fill="none" stroke="#505050" stroke-width="3"/><path d="M16.5 8.8 L26 5.8 L24 15.5 Z" fill="#505050"/><circle cx="12.5" cy="11.3" r="2.9" fill="#505050"/></svg>
<svg style="left:1686px;top:85px;" width="13" height="20" viewBox="0 0 13 20"><rect x="4.7" y="0" width="3.6" height="8" fill="#505050"/><path d="M0 6 H13 L6.5 12.3 Z" fill="#505050"/><circle cx="6.5" cy="16.6" r="2.9" fill="#505050"/></svg>
<svg style="left:1728.3px;top:85px;" width="13" height="20" viewBox="0 0 13 20"><rect x="4.7" y="5" width="3.6" height="8" fill="#505050"/><path d="M0 6.3 H13 L6.5 0 Z" fill="#505050"/><circle cx="6.5" cy="16.6" r="2.9" fill="#505050"/></svg>
<div style="left:1761px;top:82px;width:1px;height:24px;background:#c8c8c8;"></div>
<svg style="left:1775px;top:81.5px;" width="28" height="25" viewBox="0 0 28 25"><path d="M0.5 6.5 H10 L4 18 H0.5 Z" fill="#505050"/><path d="M11.5 18 L17.5 6.5 H22 L27.5 12.2 L22 18 Z" fill="#505050"/><path d="M3 24.5 L19.5 1" stroke="#505050" stroke-width="2.6"/></svg>
<svg style="left:1820.5px;top:83.5px;" width="21.5" height="21" viewBox="0 0 21.5 21"><path d="M6.3 0 H15.2 L21.5 6.2 V14.8 L15.2 21 H6.3 L0 14.8 V6.2 Z" fill="#505050"/><rect x="6" y="6" width="3.2" height="8.6" fill="#fff"/><rect x="12.3" y="6" width="3.2" height="8.6" fill="#fff"/></svg>
<div style="left:1859px;top:82px;width:1px;height:24px;background:#c8c8c8;"></div>
<div style="left:1875px;top:85.5px;width:16px;height:15.5px;background:linear-gradient(#f2f2f2,#e0e0e0);box-sizing:border-box;border:1px solid #b0b0b0;border-radius:3px;"></div>
<div style="left:1901.8px;top:85.46px;font-family:'Liberation Sans', sans-serif;font-size:18px;line-height:18px;color:#333333;white-space:pre;">As</div>
<div style="left:1916px;top:75px;width:4px;height:39px;background:#f3f3f3;"></div>
<div style="left:1584px;top:115px;width:336px;height:43px;background:#fffbe8;"></div>
<div style="left:1584px;top:158px;width:336px;height:1px;background:#dddddd;"></div>
<svg style="left:1593px;top:128.2px;" width="15" height="15" viewBox="0 0 15 15"><circle cx="7.5" cy="7.5" r="7.5" fill="#6b5e00"/><rect x="6.2" y="6" width="2.8" height="6" fill="#fff"/><rect x="5" y="11" width="5.2" height="1.5" fill="#fff"/><rect x="5.3" y="6" width="3" height="1.3" fill="#fff"/><circle cx="7.6" cy="3.8" r="1.5" fill="#fff"/></svg>
<div style="left:1614.7px;top:127.96px;font-family:'Liberation Sans', sans-serif;font-size:18px;line-height:18px;color:#6b6030;white-space:pre;font-weight:bold;letter-spacing:-0.142px;">Paused on breakpoint</div>
<div style="left:1584px;top:159px;width:336px;height:32px;background:#f3f3f3;"></div>
<div style="left:1584px;top:191px;width:336px;height:1px;background:#d8d8d8;"></div>
<svg style="left:1592.4px;top:169.4px;" width="10.2" height="11.2" viewBox="0 0 10.2 11.2"><path d="M0 0 L10.2 5.6 L0 11.2 Z" fill="#808080"/></svg>
<div style="left:1611.3px;top:165.56px;font-family:'Liberation Sans', sans-serif;font-size:18px;line-height:18px;color:#333333;white-space:pre;letter-spacing:-0.125px;">Watch</div>
<div style="left:1584px;top:192px;width:336px;height:32px;background:#f3f3f3;"></div>
<div style="left:1584px;top:224px;width:336px;height:1px;background:#d8d8d8;"></div>
<svg style="left:1591.5px;top:202.7px;" width="11.4" height="10.2" viewBox="0 0 11.4 10.2"><path d="M0 0 H11.4 L5.7 10.2 Z" fill="#808080"/></svg>
<div style="left:1610.4px;top:198.56px;font-family:'Liberation Sans', sans-serif;font-size:18px;line-height:18px;color:#333333;white-space:pre;letter-spacing:-0.7px;">Call Stack</div>
<svg style="left:1590.7px;top:233.3px;" width="14" height="13" viewBox="0 0 14 13"><path d="M0 4 H6 V0 L13.6 6.3 L6 12.6 V8.6 H0 Z" fill="#3b7bea"/></svg>
<div style="left:1613.3px;top:231.76px;font-family:'Liberation Sans', sans-serif;font-size:18px;line-height:18px;color:#333333;white-space:pre;letter-spacing:0.6px;">login</div>
<div style="left:1779.3px;top:231.76px;font-family:'Liberation Sans', sans-serif;font-size:18px;line-height:18px;color:#8a8a8a;white-space:pre;letter-spacing:0.115px;">login.html:425</div>
<div style="left:1584px;top:256px;width:336px;height:1px;background:#d8d8d8;"></div>
<div style="left:1584px;top:256px;width:336px;height:32px;background:#f3f3f3;"></div>
<div style="left:1584px;top:288px;width:336px;height:1px;background:#d8d8d8;"></div>
<svg style="left:1591.5px;top:266.7px;" width="11.4" height="10.2" viewBox="0 0 11.4 10.2"><path d="M0 0 H11.4 L5.7 10.2 Z" fill="#808080"/></svg>
<div style="left:1610.5px;top:262.56px;font-family:'Liberation Sans', sans-serif;font-size:18px;line-height:18px;color:#333333;white-space:pre;letter-spacing:-0.525px;">Scope</div>
<svg style="left:1590px;top:297.6px;" width="12" height="10.2" viewBox="0 0 12 10.2"><path d="M0 0 H12 L6 10.2 Z" fill="#6e6e6e"/></svg>
<div style="left:1605.5px;top:297.55px;font-family:'Liberation Mono', monospace;font-size:16.5px;line-height:16.5px;color:#222222;white-space:pre;letter-spacing:0.1px;">Local</div>
<svg style="left:1609px;top:322px;" width="11" height="11.7" viewBox="0 0 11 11.7"><path d="M0 0 L11 5.85 L0 11.7 Z" fill="#6e6e6e"/></svg>
<div style="left:1625px;top:320.25px;font-family:'Liberation Mono', monospace;font-size:16.5px;line-height:16.5px;white-space:pre;color:#222;letter-spacing:-0.14px"><span style="color:#881280">this</span>: <span style="color:#881280">input</span><span style="color:#1a1aa6">#btnLogin</span></div>
<svg style="left:1591px;top:350px;" width="11" height="11.9" viewBox="0 0 11 11.9"><path d="M0 0 L11 5.95 L0 11.9 Z" fill="#6e6e6e"/></svg>
<div style="left:1605.8px;top:350.85px;font-family:'Liberation Mono', monospace;font-size:16.5px;line-height:16.5px;color:#222222;white-space:pre;letter-spacing:-0.06px;">Global</div>
<div style="left:1854.6px;top:351.15px;font-family:'Liberation Mono', monospace;font-size:16.5px;line-height:16.5px;color:#222222;white-space:pre;letter-spacing:-0.02px;">Window</div>
<div style="left:1584px;top:373px;width:336px;height:1px;background:#d8d8d8;"></div>
<div style="left:1584px;top:373px;width:336px;height:32px;background:#f3f3f3;"></div>
<div style="left:1584px;top:405px;width:336px;height:1px;background:#d8d8d8;"></div>
<svg style="left:1591.5px;top:383.7px;" width="11.4" height="10.2" viewBox="0 0 11.4 10.2"><path d="M0 0 H11.4 L5.7 10.2 Z" fill="#808080"/></svg>
<div style="left:1609.9px;top:379.56px;font-family:'Liberation Sans', sans-serif;font-size:18px;line-height:18px;color:#333333;white-space:pre;letter-spacing:-0.09px;">Breakpoints</div>
<div style="left:1584px;top:406px;width:336px;height:59px;background:#ffffc4;"></div>
<div style="left:1602px;top:416.2px;width:16px;height:16px;box-sizing:border-box;border:1.5px solid #a3a3a3;border-radius:3px;background:linear-gradient(#f0f0f0,#dedede);box-shadow:0 1px 1px rgba(0,0,0,0.15)"></div>
<svg style="left:1604.5px;top:419.2px;" width="11" height="10" viewBox="0 0 11 10"><path d="M1.2 5.2 L4.2 8.5 L10 1.5" fill="none" stroke="#3a3a3a" stroke-width="2.8"/></svg>
<div style="left:1628.2px;top:416.26px;font-family:'Liberation Sans', sans-serif;font-size:18px;line-height:18px;color:#333333;white-space:pre;letter-spacing:0.123px;">login.html:425</div>
<div style="left:1595.9px;top:442.05px;font-family:'Liberation Mono', monospace;font-size:16.5px;line-height:16.5px;color:#222222;white-space:pre;letter-spacing:0.065px;">SsoIndex.AjaxSsoLogin();</div>
<div style="left:1602px;top:475.3px;width:16px;height:16px;box-sizing:border-box;border:1.5px solid #a3a3a3;border-radius:3px;background:linear-gradient(#f0f0f0,#dedede);box-shadow:0 1px 1px rgba(0,0,0,0.15)"></div>
<svg style="left:1604.5px;top:478.3px;" width="11" height="10" viewBox="0 0 11 10"><path d="M1.2 5.2 L4.2 8.5 L10 1.5" fill="none" stroke="#3a3a3a" stroke-width="2.8"/></svg>
<div style="left:1629.4px;top:475.46px;font-family:'Liberation Sans', sans-serif;font-size:18px;line-height:18px;color:#333333;white-space:pre;letter-spacing:-0.407px;">vendor.87658851e2671cfa5cbe.js…</div>
<div style="left:1595.5px;top:500.85px;font-family:'Liberation Mono', monospace;font-size:16.5px;line-height:16.5px;color:#222222;white-space:pre;letter-spacing:0.053px;">o.send(g ? null : t)</div>
<div style="left:1584px;top:524px;width:336px;height:1px;background:#d8d8d8;"></div>
<div style="left:1584px;top:525px;width:336px;height:131px;background:#f3f3f3;"></div>
<svg style="left:1592.4px;top:535.4px;" width="10.2" height="11.2" viewBox="0 0 10.2 11.2"><path d="M0 0 L10.2 5.6 L0 11.2 Z" fill="#808080"/></svg>
<div style="left:1610.9px;top:531.76px;font-family:'Liberation Sans', sans-serif;font-size:18px;line-height:18px;color:#333333;white-space:pre;letter-spacing:-0.429px;">XHR Breakpoints</div>
<div style="left:1584px;top:557px;width:336px;height:1px;background:#d8d8d8;"></div>
<svg style="left:1592.4px;top:568.4px;" width="10.2" height="11.2" viewBox="0 0 10.2 11.2"><path d="M0 0 L10.2 5.6 L0 11.2 Z" fill="#808080"/></svg>
<div style="left:1609.9px;top:564.76px;font-family:'Liberation Sans', sans-serif;font-size:18px;line-height:18px;color:#333333;white-space:pre;letter-spacing:-0.057px;">DOM Breakpoints</div>
<div style="left:1584px;top:590px;width:336px;height:1px;background:#d8d8d8;"></div>
<svg style="left:1592.4px;top:601.4px;" width="10.2" height="11.2" viewBox="0 0 10.2 11.2"><path d="M0 0 L10.2 5.6 L0 11.2 Z" fill="#808080"/></svg>
<div style="left:1610.4px;top:597.76px;font-family:'Liberation Sans', sans-serif;font-size:18px;line-height:18px;color:#333333;white-space:pre;letter-spacing:-0.267px;">Global Listeners</div>
<div style="left:1584px;top:623px;width:336px;height:1px;background:#d8d8d8;"></div>
<svg style="left:1592.4px;top:634.4px;" width="10.2" height="11.2" viewBox="0 0 10.2 11.2"><path d="M0 0 L10.2 5.6 L0 11.2 Z" fill="#808080"/></svg>
<div style="left:1609.9px;top:630.76px;font-family:'Liberation Sans', sans-serif;font-size:18px;line-height:18px;color:#333333;white-space:pre;letter-spacing:-0.248px;">Event Listener Breakpoints</div>
<div style="left:1905px;top:475.6px;width:12px;height:85.4px;border-radius:6px;background:#5c5c5c;box-shadow:0 0 2px rgba(0,0,0,0.3)"></div>
<div style="left:1907px;top:537.0px;width:8px;height:1.2px;background:#4fdc6a;"></div>
<div style="left:1907px;top:539.8px;width:8px;height:1.2px;background:#4fdc6a;"></div>
<div style="left:1907px;top:542.6px;width:8px;height:1.2px;background:#4fdc6a;"></div>
<div style="left:1907px;top:545.4px;width:8px;height:1.2px;background:#4fdc6a;"></div>
<div style="left:1907px;top:548.2px;width:8px;height:1.2px;background:#4fdc6a;"></div>
<div style="left:1907px;top:551.0px;width:8px;height:1.2px;background:#4fdc6a;"></div>
<div style="left:1907px;top:553.8px;width:8px;height:1.2px;background:#4fdc6a;"></div>
<div style="left:1907px;top:556.6px;width:8px;height:1.2px;background:#4fdc6a;"></div>
</body></html>
